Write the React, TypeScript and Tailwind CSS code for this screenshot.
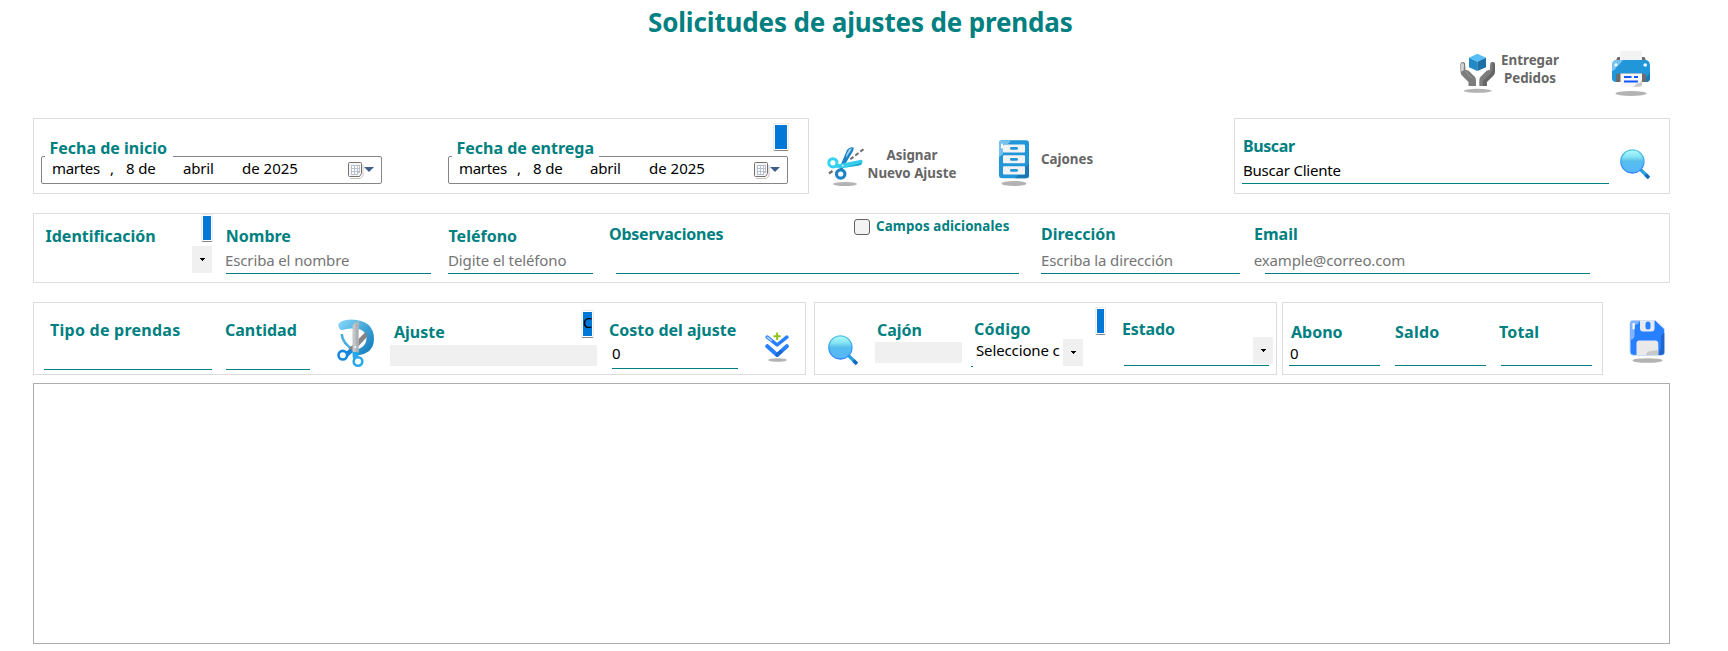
import React from "react";

type BoxProps = { className?: string; children?: React.ReactNode };

const Label = ({ className = "", children }: BoxProps) => (
  <div className={`h-[22px] whitespace-nowrap text-[16px] font-bold leading-[22px] text-[#008080] ${className}`}>{children}</div>
);

const Value = ({ className = "", children }: BoxProps) => (
  <div className={`h-5 whitespace-nowrap text-[15px] leading-5 tracking-[-0.13px] ${className}`}>{children}</div>
);

const Line = ({ className = "" }: BoxProps) => <div className={`h-px shrink-0 bg-[#008080] ${className}`} />;

const Panel = ({ className = "", children }: BoxProps) => (
  <section className={`flex shrink-0 items-start border border-[#dcdcdc] ${className}`}>{children}</section>
);

const Marker = ({ className = "", children }: BoxProps) => (
  <div className={`h-7 shrink-0 rounded-[2px] border border-[#ebebeb] border-b-[#868686] bg-white p-px ${className}`}>
    <div className="h-6 overflow-hidden bg-[#0078d7] text-[15px] leading-5 text-black">{children}</div>
  </div>
);

const DropButton = ({ className = "" }: BoxProps) => (
  <button className={`flex h-[27px] w-5 shrink-0 items-center justify-center bg-[#f0f0f0] ${className}`}>
    <svg width="5" height="3" viewBox="0 0 5 3" shapeRendering="crispEdges">
      <path d="M0 0H5V1H4V2H3V3H2V2H1V1H0Z" fill="#000" />
    </svg>
  </button>
);

const DateBox = ({ className = "" }: BoxProps) => (
  <div className={`-mt-[3px] flex h-7 rounded-[2px] border border-[#858585] pt-px ${className}`}>
    <Value className="ml-2.5 w-[58px] tracking-[-0.3px]!">martes</Value>
    <Value className="w-4">,</Value>
    <Value className="w-[57px]">8 de</Value>
    <Value className="w-[59px] tracking-[-0.2px]!">abril</Value>
    <Value className="grow tracking-[0px]!">de 2025</Value>
    <svg width="27" height="18" viewBox="0 0 27 18" className="mr-1.5 mt-1">
      <path d="M2 16.5H12L15 14V3" fill="none" stroke="#c9c4c2" />
      <path d="M1.5 .5H12.500Q13.500 .5 13.500 1.500V11.500L11.500 14.500H1.500Q.5 14.500 .5 13.500V1.500Q.5 .5 1.500 .5Z" fill="#f3f5f7" stroke="#7b6f6c" />
      <path d="M3 3H12V11H10V13H3Z" fill="#b7c0cc" />
      <path d="M4 4h2v2h-2zM7 4h2v2h-2zM10 4h1v2h-1zM4 7h2v2h-2zM7 7h2v2h-2zM10 7h1v2h-1zM4 10h2v2h-2zM7 10h2v2h-2z" fill="#fff" />
      <path d="M16 5H26L21 10Z" fill="#405e8c" />
    </svg>
  </div>
);

const Magnifier = ({ className = "", id }: { className?: string; id: string }) => (
  <svg width="31" height="31" viewBox="0 0 31 31" className={`shrink-0 ${className}`}>
    <defs>
      <linearGradient id={id} x1="0" y1="0" x2="0" y2="1">
        <stop offset="0" stopColor="#b2fbfb" />
        <stop offset=".3" stopColor="#86e4f3" />
        <stop offset=".5" stopColor="#55bdeb" />
        <stop offset="1" stopColor="#58b6ff" />
      </linearGradient>
      <linearGradient id={`${id}-rim`} x1="0" y1="0" x2="0" y2="1">
        <stop offset="0" stopColor="#55c6df" />
        <stop offset="1" stopColor="#2b7cff" />
      </linearGradient>
    </defs>
    <path d="M20.500 20.500L28.300 28.300" stroke="#2ba3de" strokeWidth="3.400" />
    <path d="M25.500 25.500L29 29" stroke="#1769bd" strokeWidth="3.400" />
    <circle cx="12.400" cy="12.400" r="11.600" fill={`url(#${id})`} stroke={`url(#${id}-rim)`} strokeWidth="1.300" />
  </svg>
);

const CutIcon = () => (
  <svg width="38" height="40" viewBox="0 0 38 40" className="mt-[29px] shrink-0">
    <ellipse cx="18" cy="37" rx="12" ry="2" fill="#b3b3b3" />
    <path d="M36.500 2.200L23 12.500" stroke="#6e6e6e" strokeWidth="2" strokeDasharray="4 2.300" />
    <path d="M2 26.500L5.500 24" stroke="#6e6e6e" strokeWidth="2.200" />
    <path d="M14.500 16L20 3Q22-.3 26.500 .5Q27 2.500 25.500 5L18 17.500L15 23.500L12.500 22Z" fill="#1c82c4" />
    <path d="M19.500 7L22 2.500Q23 1.300 25 1.500L19 11Z" fill="#9fd3f3" />
    <path d="M8 17.500L13 17L33 13Q36 12.300 35.500 15Q35 18 32 18.600L17 21L8 20.800Z" fill="#35cdea" />
    <path d="M19 20.300L35.300 15.500Q34.800 18 32 18.600Z" fill="#1fa9d2" />
    <circle cx="5.900" cy="15.800" r="4.100" fill="none" stroke="#35d3f2" strokeWidth="3" />
    <circle cx="13.700" cy="27" r="4.200" fill="none" stroke="#1c82c4" strokeWidth="3.200" />
    <circle cx="15.800" cy="18.500" r=".9" fill="#c8f2fb" />
  </svg>
);

const DrawersIcon = () => (
  <svg width="30" height="46" viewBox="0 0 30 46" className="mt-[22px] shrink-0">
    <ellipse cx="15" cy="43.500" rx="12.500" ry="2.500" fill="#b3b3b3" />
    <rect y=".3" width="30" height="38" rx="3" fill="#2196d8" />
    <path d="M0 17V3.300Q0 .3 3 .3H12L9 4H4V14Z" fill="#77c1ec" />
    <path d="M16 38.300L19 35H26V27L30 24V35.300Q30 38.300 27 38.300Z" fill="#1a79b4" />
    <g fill="#f3f3f3">
      <rect x="4" y="4.500" width="22" height="8" rx="1" />
      <rect x="4" y="15.300" width="22" height="8" rx="1" />
      <rect x="4" y="26.300" width="22" height="8.300" rx="1" />
    </g>
    <rect x="2" y="3.500" width="2" height="5" rx="1" fill="#fff" />
    <g fill="#2196d8">
      <rect x="11" y="7" width="8" height="2.800" rx="1.400" />
      <rect x="11" y="18" width="8" height="2.800" rx="1.400" />
      <rect x="11" y="29" width="8" height="2.800" rx="1.400" />
    </g>
  </svg>
);

const DeliverIcon = () => (
  <svg width="36" height="41" viewBox="0 0 36 41" className="mt-[13px] shrink-0">
    <ellipse cx="17.700" cy="37.800" rx="14" ry="2" fill="#b3b3b3" />
    <path d="M17.300 .7L26 4.700L17.300 8.700L9 4.700Z" fill="#55bdf7" />
    <path d="M9 4.700L17.300 8.700V18L9 14.300Z" fill="#2089c6" />
    <path d="M26 4.700L17.300 8.700V18L26 14.300Z" fill="#1b70a5" />
    <path d="M.3 12Q.5 9 3 9Q5.300 9 5.200 12L5.500 17Q8 16.500 10 19L15 24Q16 25.500 16 28V33H8.500V29L2 22.500Q.6 21 .6 19Z" fill="#7d7d7d" />
    <path d="M1 12Q1.200 10 2.700 10Q4.300 10 4 12.500L3.500 17.500L1.300 18.500Z" fill="#d8d8d8" />
    <path d="M5.500 18Q7 21 11.500 25" stroke="#999" fill="none" />
    <path d="M35 12Q34.800 9 32.300 9Q30 9 30.100 12L29.800 17Q27.300 16.500 25.300 19L20.300 24Q19.300 25.500 19.300 28V33H26.800V29L33.300 22.500Q34.700 21 34.700 19Z" fill="#7d7d7d" />
    <path d="M35 12V19Q34.700 21.500 33 23L26.800 29V33H23V28L30 21L32.500 17V9Q34.800 9 35 12Z" fill="#666" />
  </svg>
);

const PrinterIcon = () => (
  <svg width="38" height="47" viewBox="0 0 38 47" className="mt-2.5 shrink-0">
    <ellipse cx="19" cy="43.500" rx="15.500" ry="2.400" fill="#b3b3b3" />
    <path d="M4 10.500L5.500 7H32.500L34 10.500Z" fill="#6c6c6c" />
    <path d="M8 2Q8 .7 9.500 .7H28.500Q30 .7 30 2V11H8Z" fill="#f3f3f3" />
    <path d="M0 15Q.5 10 5 10H33Q37.500 10 38 15V28Q38 32 34 32H4Q0 32 0 28Z" fill="#2196d8" />
    <path d="M0 21V15Q.5 10 5 10H11Q8 15 4 17Q4 20 0 21Z" fill="#79c3ee" />
    <path d="M38 22V28Q38 32 34 32H30V29Q35 28 38 22Z" fill="#1a79b4" />
    <circle cx="4" cy="15" r="1.700" fill="#e6f6ff" />
    <circle cx="33.200" cy="15" r="1.800" fill="#f5fbff" />
    <path d="M4 32V26Q4 23.500 7 23.500H31Q34 23.500 34 26V32Z" fill="#6c6c6c" />
    <path d="M8.500 23.500H30V34Q30 36.800 27 36.800H11Q8.500 36.800 8.500 34.500Z" fill="#f7f7f7" />
    <path d="M20.500 36.800Q23 36.500 24 34Q30 33 30 29V34Q30 36.800 27 36.800Z" fill="#c9c9c9" />
    <path d="M12 26.900H19.500M22 26.900H26M12 31.400H26" stroke="#1457ff" strokeWidth="2" />
  </svg>
);

const SaveIcon = () => (
  <svg width="37" height="44" viewBox="0 0 37 44" className="ml-[26px] mt-[17px] shrink-0">
    <ellipse cx="18.500" cy="41.500" rx="15" ry="2.300" fill="#b3b3b3" />
    <path d="M1 4.500Q1 1.500 4 1.500H26.500L35.500 10V33Q35.500 36.300 32 36.300H4.500Q1 36.300 1 33Z" fill="#2780ff" stroke="#c9dcf7" />
    <path d="M1.300 21V4.500Q1.300 1.800 4 1.800H11L9 5Q5.500 5 5.500 9V17Q5 20 1.300 21Z" fill="#82b5ff" />
    <path d="M35.300 14V33Q35.300 36 32 36H29V33Q32 31 32 27V18Q32 15 35.300 14Z" fill="#1f66cc" />
    <path d="M11 1.500H25.500V9.500Q25.500 12.500 22.500 12.500H14Q11 12.500 11 9.500Z" fill="#e6eaf1" />
    <rect x="16.500" y="2.500" width="5" height="8" rx="2.500" fill="#2780ff" />
    <rect x="3.500" y="4" width="2.200" height="6.500" rx="1" fill="#fff" />
    <path d="M7.500 36V24.500Q7.500 21.500 10.500 21.500H26Q29.300 21.500 29.300 24.500V36Z" fill="#e9e9e9" />
    <path d="M17 36Q18 32 22 32L29.300 31V36Z" fill="#c8c8c8" />
  </svg>
);

const GarmentIcon = () => (
  <svg width="38" height="49" viewBox="0 0 38 49" className="ml-[27px] mt-4 shrink-0">
    <defs>
      <linearGradient id="loop" x1="0" y1="0" x2="1" y2="1">
        <stop offset="0" stopColor="#8edcff" />
        <stop offset=".5" stopColor="#3fa4d6" />
        <stop offset="1" stopColor="#0d75b8" />
      </linearGradient>
    </defs>
    <path d="M4.700 15Q5.500 25 17 31" fill="none" stroke="#48aede" strokeWidth="2.600" />
    <path d="M1.300 5.500Q3 1 14 .4Q37 1 37 20Q36.500 35 20 36.200L19 31Q29 28 29.500 20Q29 9 16 9.500Q10 9.200 5.500 11Q1.500 11 1.300 5.500Z" fill="url(#loop)" />
    <path d="M29 12.500L30 18L16 33L11.500 30Z" fill="#858585" />
    <path d="M15.500 7Q17.500 2.500 21.500 2.500V34H15.500Z" fill="#c3c7ca" />
    <path d="M18.500 3.500L21.500 2.500V34H18.500Z" fill="#adb1b4" />
    <path d="M9 33L13 29.500L16 33L10.500 38Z" fill="#1787dd" />
    <circle cx="5.800" cy="36.200" r="4.300" fill="#fff" stroke="#1487df" strokeWidth="2.600" />
    <path d="M15.500 33H21.500V37L17 41Q15 38 15.500 33Z" fill="#28a8ec" />
    <circle cx="21" cy="42.500" r="4.300" fill="#fff" stroke="#28a8ec" strokeWidth="2.600" />
    <circle cx="18.400" cy="28" r="1" fill="#fff" />
  </svg>
);

const AddDownIcon = () => (
  <svg width="24" height="31" viewBox="0 0 24 31" className="ml-[27px] mt-7 shrink-0">
    <ellipse cx="12.500" cy="29" rx="9.300" ry="1.700" fill="#b3b3b3" />
    <g fill="none" strokeLinecap="round" strokeLinejoin="round">
      <path d="M2.300 6.200L12.100 14L21.800 6.200" stroke="#2780ff" strokeWidth="3.500" />
      <path d="M2.300 15.200L12.100 24L21.800 15.200" stroke="#2780ff" strokeWidth="4" />
      <path d="M12.100 24L16 20.500" stroke="#1f66cc" strokeWidth="3.300" />
      <path d="M2.500 6.300L6.500 9.500" stroke="#b9d6ff" strokeWidth="1.500" />
    </g>
    <path d="M12.100 1.500V9M8.500 5.300H15.700" stroke="#8fc31a" strokeWidth="1.900" />
  </svg>
);

export default function App() {
  return (
    <main className="flex h-[651px] w-[1728px] flex-col overflow-hidden bg-white pl-[33px] font-['Noto_Sans','Open_Sans',sans-serif] text-black">
      <h1 className="ml-[615px] mt-1 h-9 whitespace-nowrap text-[26px] font-bold leading-9 tracking-[-0.15px] text-[#008080]">
        Solicitudes de ajustes de prendas
      </h1>

      <nav className="flex h-[78px] w-[1617px] items-start justify-end">
        <button className="flex items-start">
          <DeliverIcon />
          <span className="ml-[5px] mr-[53px] mt-[11px] w-[58px] text-center text-[13.330px] font-bold leading-[18px] text-[#666]">
            Entregar
            <br />
            Pedidos
          </span>
        </button>
        <PrinterIcon />
      </nav>

      <div className="flex h-[76px] shrink-0 items-start">
        <Panel className="h-[76px] w-[776px]">
          <div className="ml-[7px] mt-[18px] w-[341px] shrink-0">
            <Label className="relative ml-1 w-32 bg-white pl-[4.500px]">Fecha de inicio</Label>
            <DateBox />
          </div>
          <div className="ml-[66px] mt-[18px] w-[341px] shrink-0">
            <div className="flex h-[22px] items-start">
              <Label className="relative ml-1 w-[147px] shrink-0 bg-white pl-[4.500px]">Fecha de entrega</Label>
              <Marker className="-mt-3.5 ml-[174px] w-4" />
            </div>
            <DateBox className="w-[340px]" />
          </div>
        </Panel>

        <button className="ml-[18px] flex w-[131px] shrink-0 items-start">
          <CutIcon />
          <span className="ml-0.5 mt-7 w-[90px] whitespace-nowrap text-center text-[13.330px] font-bold leading-[18px] text-[#666]">
            Asignar
            <br />
            Nuevo Ajuste
          </span>
        </button>
        <button className="ml-[41px] flex w-[100px] shrink-0 items-start">
          <DrawersIcon />
          <span className="ml-3 mt-8 text-[13.330px] font-bold leading-[18px] text-[#666]">Cajones</span>
        </button>

        <Panel className="ml-[135px] h-[76px] w-[436px]">
          <div className="ml-[7px] mt-4 w-[367px] shrink-0">
            <Label className="tracking-[-0.4px] pl-px">Buscar</Label>
            <Value className="mt-[3px] pl-px tracking-[-0.22px]!">Buscar Cliente</Value>
            <Line className="mt-[3px]" />
          </div>
          <Magnifier id="lens-client" className="ml-[11px] mt-[30px]" />
        </Panel>
      </div>

      <Panel className="mt-[19px] h-[70px] w-[1637px]">
        <div className="w-[191px] shrink-0">
          <div className="flex h-7 items-start">
            <Label className="mt-[11px] w-[167px] pl-[11.500px]">Identificación</Label>
            <Marker className="w-3" />
          </div>
          <DropButton className="ml-[158px] mt-1" />
        </div>
        <div className="mt-[11px] w-[206px] shrink-0">
          <Label className="pl-[0.800px]">Nombre</Label>
          <Value className="mt-[3px] text-[#757575]">Escriba el nombre</Value>
          <Line className="ml-px mt-[3px]" />
        </div>
        <div className="ml-[17px] mt-[11px] w-[145px] shrink-0">
          <Label className="pl-[0.500px]">Teléfono</Label>
          <Value className="mt-[3px] text-[#757575]">Digite el teléfono</Value>
          <Line className="mt-[3px]" />
        </div>
        <div className="ml-4 w-[410px] shrink-0">
          <div className="flex h-[31px] items-start">
            <Label className="mt-[9px] w-[245px] tracking-[-0.230px]">Observaciones</Label>
            <div className="mt-[5px] h-4 w-4 rounded-[3px] border border-[#626262] bg-[#f3f3f3]" />
            <span className="ml-1.5 mt-[3px] whitespace-nowrap text-[13.330px] font-bold leading-[18px] tracking-[0.120px] text-[#008080]">
              Campos adicionales
            </span>
          </div>
          <Line className="ml-[7px] mt-7" />
        </div>
        <div className="ml-[22px] mt-[9px] w-[199px] shrink-0">
          <Label>Dirección</Label>
          <Value className="mt-[5px] text-[#757575]">Escriba la dirección</Value>
          <Line className="mt-[3px]" />
        </div>
        <div className="ml-[13px] mt-[9px] w-[337px] shrink-0">
          <Label className="pl-px">Email</Label>
          <Value className="mt-[5px] pl-[0.700px] text-[#757575]">example@correo.com</Value>
          <Line className="ml-3 mt-[3px]" />
        </div>
      </Panel>

      <div className="mt-[19px] flex h-[73px] shrink-0 items-start">
        <Panel className="h-[73px] w-[773px]">
          <div className="ml-2.5 mt-4 w-[168px] shrink-0">
            <Label className="pl-1.5 tracking-[0.250px]">Tipo de prendas</Label>
            <Line className="mt-7" />
          </div>
          <div className="ml-[13px] mt-4 w-[85px] shrink-0">
            <Label>Cantidad</Label>
            <Line className="ml-px mt-7" />
          </div>
          <GarmentIcon />
          <div className="ml-[15px] w-[207px] shrink-0">
            <div className="flex h-10 items-start">
              <Label className="mt-[18px] w-[191px] pl-1">Ajuste</Label>
              <Marker className="mt-[7px] w-[13px]">C</Marker>
            </div>
            <div className="mt-0.5 h-[21px] bg-[#f0f0f0]" />
          </div>
          <div className="ml-3 mt-4 w-[129px] shrink-0">
            <Label>Costo del ajuste</Label>
            <Value className="mt-0.5 pl-[3px]">0</Value>
            <Line className="ml-[3px] mt-[5px]" />
          </div>
          <AddDownIcon />
        </Panel>

        <Panel className="ml-2 h-[73px] w-[463px]">
          <Magnifier id="lens-drawer" className="ml-[13px] mt-8" />
          <div className="ml-4 mt-4 w-[87px] shrink-0">
            <Label className="pl-0.5">Cajón</Label>
            <div className="mt-px h-[21px] bg-[#f0f0f0]" />
          </div>
          <div className="ml-[9px] w-[136px] shrink-0">
            <div className="flex h-[37px] items-start">
              <Label className="mt-[15px] w-[125px] pl-[3px] tracking-[0.250px]">Código</Label>
              <Marker className="-ml-px mt-1 w-[11px]" />
            </div>
            <div className="flex h-[26px] items-start">
              <Value className="w-[92px] pl-[5px]">Seleccione c</Value>
              <DropButton className="-mt-px" />
            </div>
            <Line className="w-0.5" />
          </div>
          <div className="ml-[15px] mt-[15px] w-[151px] shrink-0">
            <Label className="tracking-[-0.150px]">Estado</Label>
            <DropButton className="-mt-[3px] ml-auto" />
            <Line className="ml-0.5 mt-px w-[145px]" />
          </div>
        </Panel>

        <Panel className="ml-[5px] h-[73px] w-[321px]">
          <div className="ml-1.5 mt-[18px] w-[91px] shrink-0">
            <Label className="pl-0.5">Abono</Label>
            <Value className="pl-px">0</Value>
            <Line className="mt-0.5" />
          </div>
          <div className="ml-[15px] mt-[18px] w-[91px] shrink-0">
            <Label className="tracking-[0.250px]">Saldo</Label>
            <Line className="mt-[22px]" />
          </div>
          <div className="ml-[13px] mt-[18px] w-[93px] shrink-0">
            <Label className="tracking-[0.150px]">Total</Label>
            <Line className="ml-0.5 mt-[22px]" />
          </div>
        </Panel>
        <SaveIcon />
      </div>

      <section className="mt-2 h-[261px] w-[1637px] shrink-0 border border-[#acacac]" />
    </main>
  );
}
